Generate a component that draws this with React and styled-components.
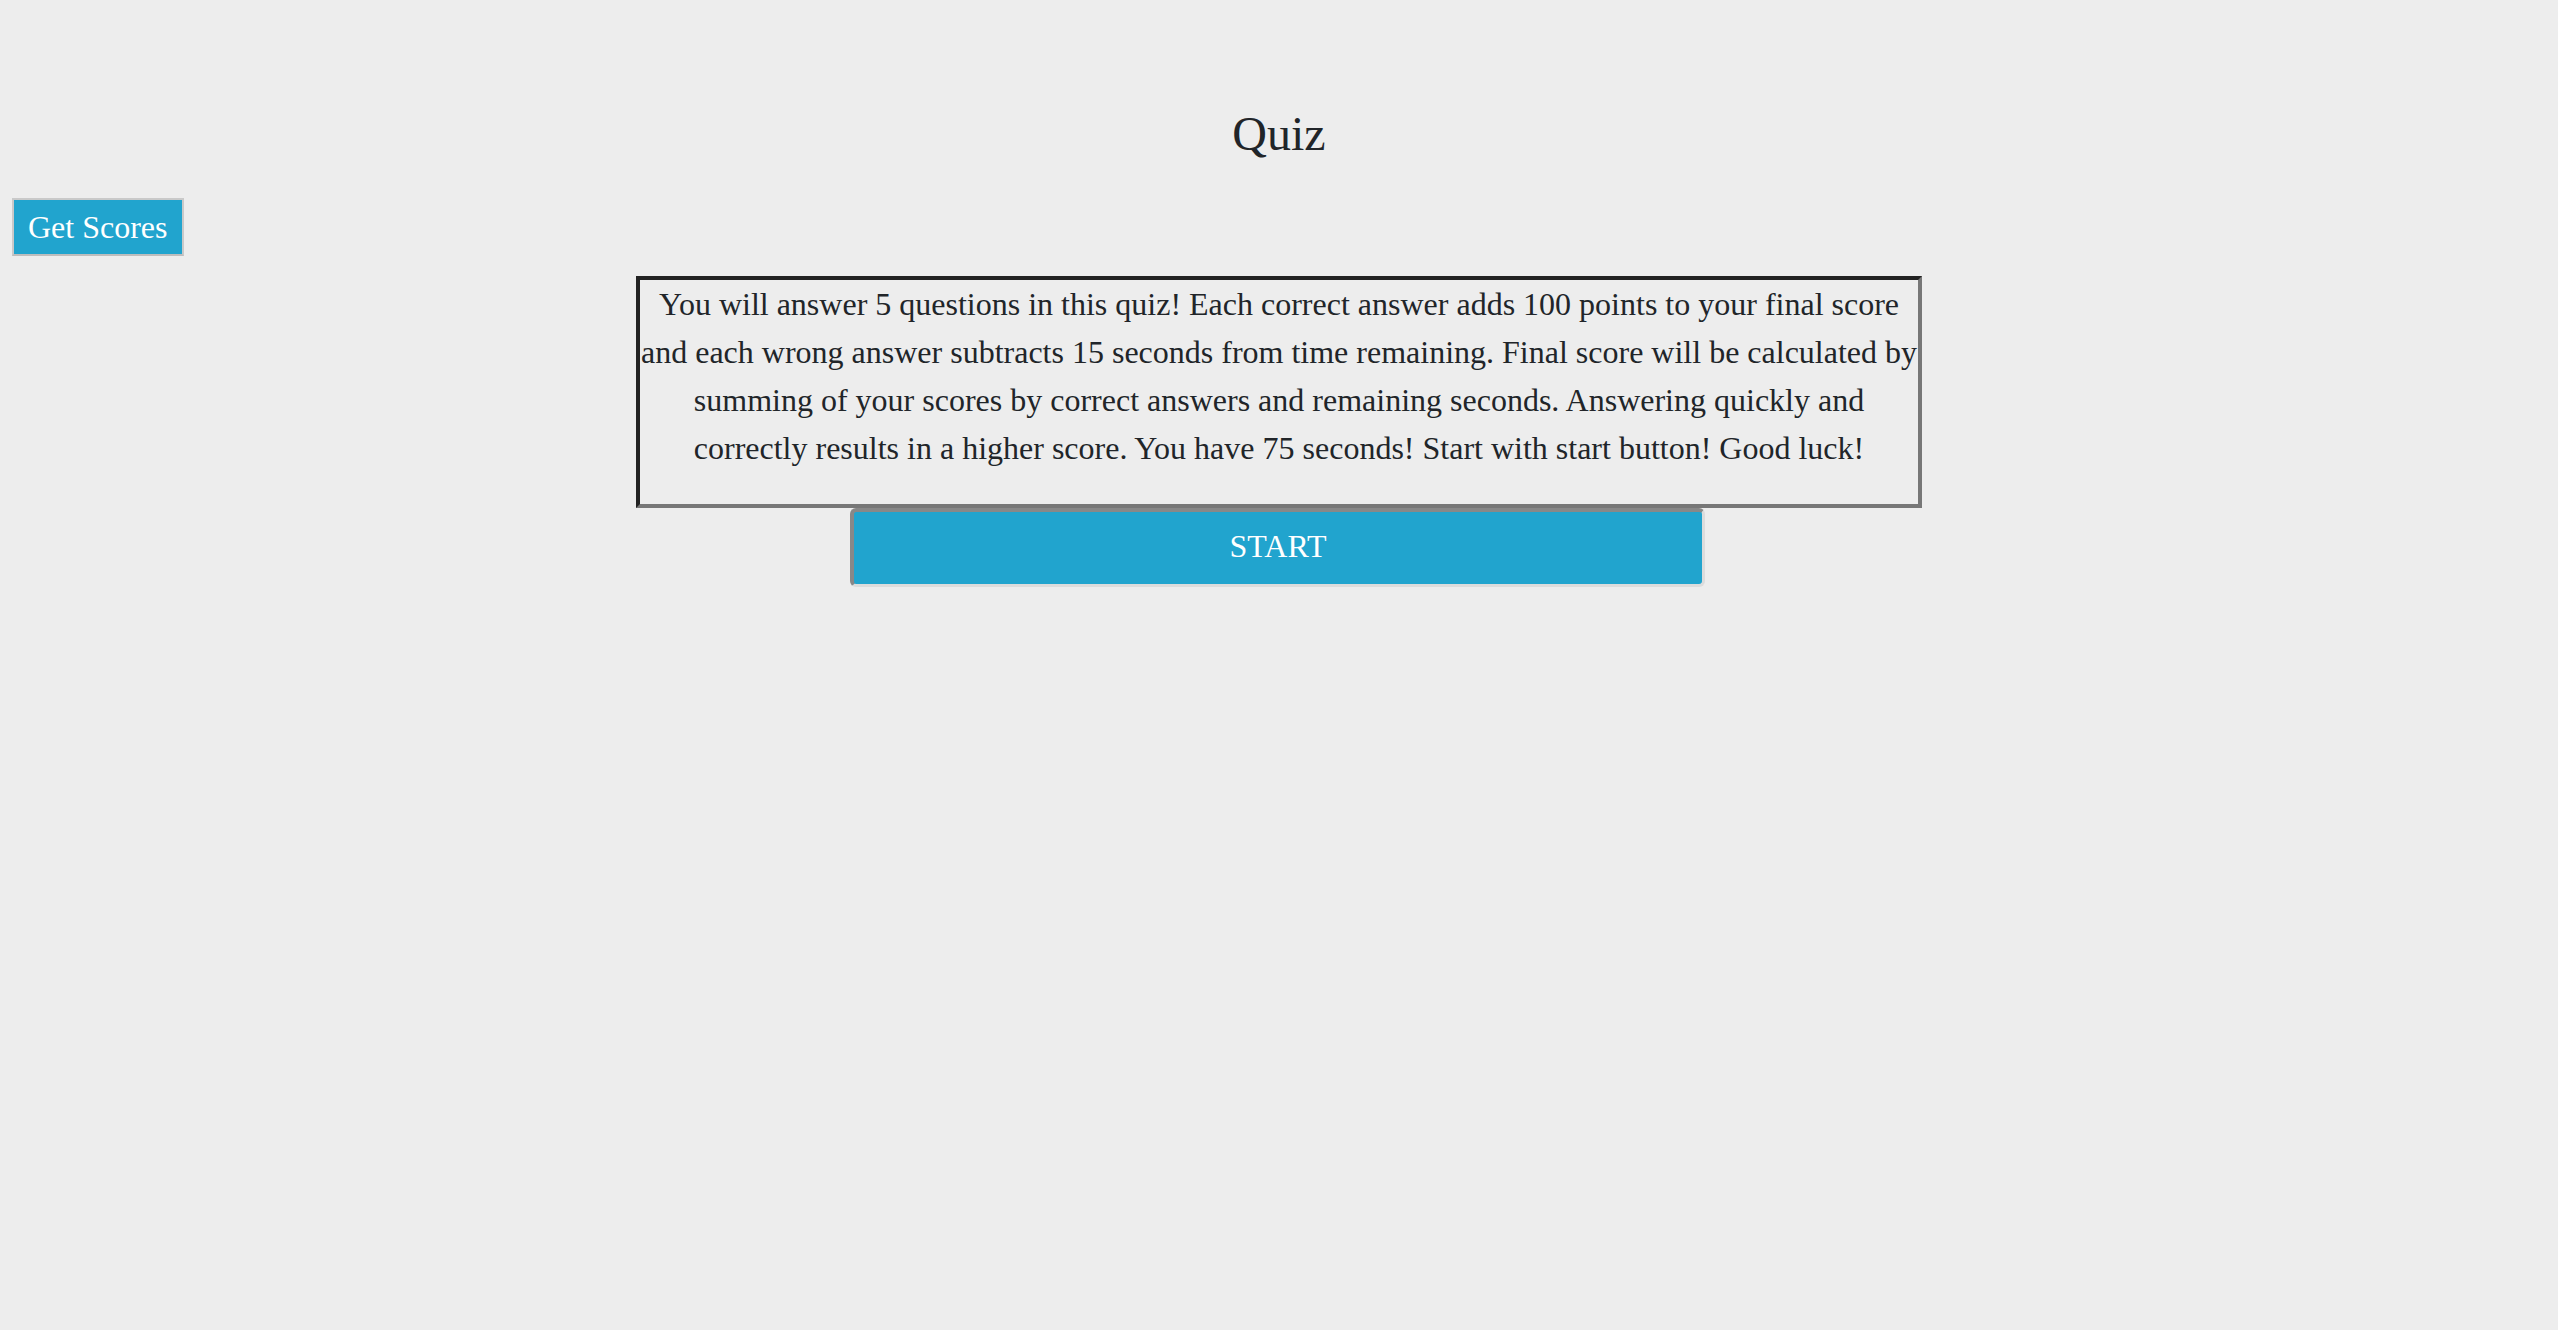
import React from "react";
import styled, { createGlobalStyle } from "styled-components";

const Global = createGlobalStyle`
  html, body {
    margin: 0;
    padding: 0;
    background: #ededed;
  }
  body {
    font-family: "Liberation Serif", "Times New Roman", serif;
    color: #212529;
    min-height: 1330px;
  }
`;

const Page = styled.div`
  display: flex;
  flex-direction: column;
`;

const Title = styled.h1`
  margin: 0;
  padding-top: 106px;
  text-align: center;
  font-size: 48px;
  line-height: 55px;
  font-weight: normal;
  color: #212529;
`;

const ScoresBar = styled.div`
  display: flex;
  padding-left: 12px;
  margin-top: 37px;
`;

const ScoresButton = styled.button`
  font-family: "Liberation Serif", "Times New Roman", serif;
  font-size: 32px;
  line-height: 38px;
  padding: 8px 14px;
  color: #ffffff;
  background: #21a4ce;
  border: 2px solid #c9c9c9;
  border-bottom-color: #bdbdbd;
  border-radius: 0;
  cursor: pointer;
`;

const Main = styled.main`
  display: flex;
  flex-direction: column;
  align-items: center;
  margin-top: 20px;
`;

const Intro = styled.div`
  box-sizing: border-box;
  width: 1286px;
  border: 4px solid #222;
  border-right-color: #777;
  border-bottom-color: #777;
  padding: 0 0 32px;
  text-align: center;
  font-size: 32px;
  line-height: 48px;
  color: #212529;
`;

const StartButton = styled.button`
  box-sizing: border-box;
  width: 855px;
  height: 79px;
  margin-right: 3px;
  font-family: "Liberation Serif", "Times New Roman", serif;
  font-size: 32px;
  color: #ffffff;
  background: #21a4ce;
  border-style: solid;
  border-width: 4px 3px 3px 4px;
  border-color: #888 #dcdcdc #dcdcdc #888;
  border-radius: 6px;
  padding: 0 0 4px;
  cursor: pointer;
`;

export default function App() {
  return (
    <Page>
      <Global />
      <Title>Quiz</Title>
      <ScoresBar>
        <ScoresButton>Get Scores</ScoresButton>
      </ScoresBar>
      <Main>
        <Intro>
          You will answer 5 questions in this quiz! Each correct answer adds 100 points to your final score and each wrong answer subtracts 15 seconds from time remaining. Final score will be calculated by summing of your scores by correct answers and remaining seconds. Answering quickly and correctly results in a higher score. You have 75 seconds! Start with start button! Good luck!
        </Intro>
        <StartButton>START</StartButton>
      </Main>
    </Page>
  );
}
